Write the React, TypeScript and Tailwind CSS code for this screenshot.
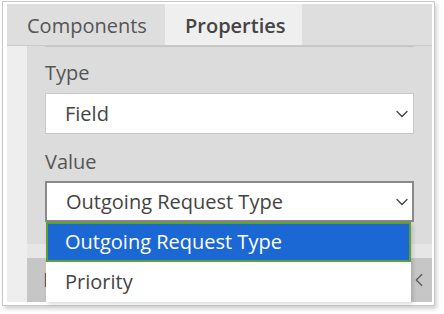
import { ChevronDown, ChevronLeft } from 'lucide-react';

const font = { fontFamily: '"Open Sans", "Noto Sans", sans-serif' };

function Select({ value, active }: { value: string; active?: boolean }) {
  return (
    <div
      className={`flex items-center justify-between h-[41px] bg-white pl-[19px] text-[20px] text-[#444] ${
        active ? 'border-2 border-[#8a8a8a] pr-0' : 'border border-[#c8c8c8] pr-[1px]'
      }`}
    >
      <span>{value}</span>
      <ChevronDown className="w-[20px] h-[20px] text-[#444]" strokeWidth={1.6} />
    </div>
  );
}

export default function App() {
  return (
    <div className="w-[444px] h-[314px] bg-white pl-[2px] pt-[1px]" style={font}>
      <div className="relative w-[433px] h-[305px] border border-[#c8c8c8] pl-[4px] pr-[2px] pt-[2px] shadow-[2px_3px_4px_rgba(0,0,0,0.18)]">
        <div className="flex flex-col h-[298px] overflow-hidden">
          {/* Tabs */}
          <div className="flex h-[42px] bg-[#dedede] border-b border-[#cacaca]">
            <div className="w-[158px] pl-[20px] pt-[3px] flex items-center text-[20px] text-[#555]">Components</div>
            <div className="w-[137px] pl-[20px] pt-[3px] flex items-center bg-[#efefef] text-[20px] font-semibold text-[#444]">
              Properties
            </div>
          </div>

          <div className="flex flex-1">
            <div className="w-[20px] bg-[#eeeeee]" />
            <div className="flex-1 flex flex-col">
              <div className="bg-[#dcdcdc] px-[18px] pb-[22px]">
                <div className="border-t border-[#c4c4c4]" />
                <div className="mt-[14px] mb-[8px] h-[24px] leading-[24px] text-[20px] text-[#555]">Type</div>
                <Select value="Field" />
                <div className="mt-[16px] mb-[7px] h-[24px] leading-[24px] text-[20px] text-[#555]">Value</div>
                <Select value="Outgoing Request Type" active />
              </div>
              <div className="h-[14px] bg-[#e6e6e6]" />
              <div className="flex-1 bg-[#c6c6c6] flex items-center justify-between pl-[16px] pr-[2px] text-[20px] text-[#555]">
                <span>P</span>
                <ChevronLeft className="w-[22px] h-[22px] text-[#555]" strokeWidth={1.3} />
              </div>
            </div>
          </div>
        </div>

        {/* Open dropdown list */}
        <div className="absolute left-[43px] top-[220px] w-[365px] h-[80px] bg-white text-[20px] shadow-[2px_2px_4px_rgba(0,0,0,0.15)]">
          <div className="h-[40px] bg-[#1b67d3] border-2 border-[#5d9f30] pl-[17px] flex items-center text-white">
            Outgoing Request Type
          </div>
          <div className="h-[40px] pl-[19px] flex items-center text-[#444]">Priority</div>
        </div>
      </div>
    </div>
  );
}
